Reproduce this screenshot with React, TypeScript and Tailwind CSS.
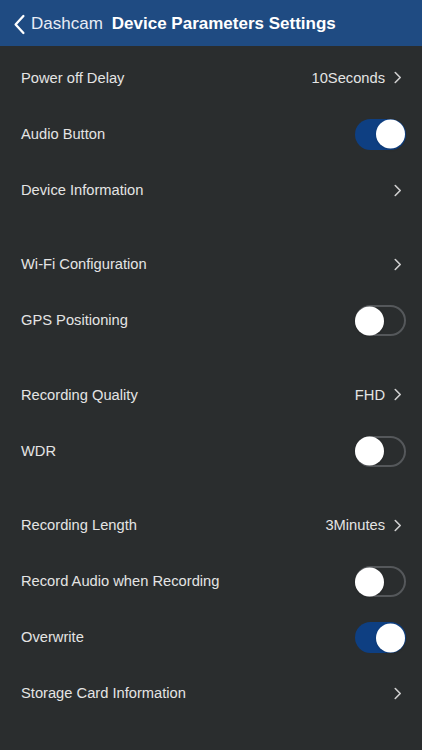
import React, { useState } from "react";

type Row =
    | { label: string; kind: "link"; value?: string }
    | { label: string; kind: "toggle"; on: boolean };

const sections: Row[][] = [
    [
        { label: "Power off Delay", kind: "link", value: "10Seconds" },
        { label: "Audio Button", kind: "toggle", on: true },
        { label: "Device Information", kind: "link" },
    ],
    [
        { label: "Wi-Fi Configuration", kind: "link" },
        { label: "GPS Positioning", kind: "toggle", on: false },
    ],
    [
        { label: "Recording Quality", kind: "link", value: "FHD" },
        { label: "WDR", kind: "toggle", on: false },
    ],
    [
        { label: "Recording Length", kind: "link", value: "3Minutes" },
        { label: "Record Audio when Recording", kind: "toggle", on: false },
        { label: "Overwrite", kind: "toggle", on: true },
        { label: "Storage Card Information", kind: "link" },
    ],
];

function Chevron({ className, left }: { className?: string; left?: boolean }) {
    return (
        <svg viewBox="0 0 10 16" className={className} fill="none" stroke="currentColor" strokeWidth="1.8" strokeLinecap="round" strokeLinejoin="round">
            <path d={left ? "M8 1.5 L2 8 L8 14.5" : "M2.5 2.5 L8 8 L2.5 13.5"} />
        </svg>
    );
}

function Toggle({ initial }: { initial: boolean }) {
    const [on, setOn] = useState(initial);
    return (
        <button
            onClick={() => setOn(!on)}
            className={`relative w-[51px] h-[31px] rounded-full transition-colors ${
                on ? "bg-[#0e3f82]" : "bg-[#2a2d2e] border-2 border-[#55585b]"
            }`}
        >
            <span
                className={`absolute top-1/2 -translate-y-1/2 w-[29px] h-[29px] rounded-full bg-white shadow transition-all ${
                    on ? "right-[1px]" : "left-[-2px]"
                }`}
            />
        </button>
    );
}

export default function App() {
    return (
        <div className="w-[422px] h-[750px] bg-[#2a2d2e] text-[#e4e4e4] overflow-hidden" style={{ fontFamily: "'Liberation Sans', Arial, sans-serif" }}>
            {/* Nav bar */}
            <div className="h-[46px] bg-[#1f4b82] flex items-center pl-[13px] pt-[2px] text-white">
                <Chevron left className="w-[13px] h-[25px] text-white" />
                <span className="ml-[5px] text-[17px] text-[#e8edf5]">Dashcam</span>
                <span className="ml-[9px] text-[17px] font-bold">Device Parameters Settings</span>
            </div>

            <div className="pt-[4px] flex flex-col gap-[18.5px]">
                {sections.map((section, i) => (
                    <div key={i} className="flex flex-col">
                        {section.map((row) => (
                            <div key={row.label} className="h-[56px] flex items-center justify-between pl-[21px] pr-[16px]">
                                <span className="text-[14.7px]">{row.label}</span>
                                {row.kind === "toggle" ? (
                                    <Toggle initial={row.on} />
                                ) : (
                                    <div className="flex items-center gap-[8px] pr-[4px]">
                                        {row.value && <span className="text-[14.7px]">{row.value}</span>}
                                        <Chevron className="w-[9px] h-[15px] text-[#d0d0d0]" />
                                    </div>
                                )}
                            </div>
                        ))}
                    </div>
                ))}
            </div>
        </div>
    );
}
